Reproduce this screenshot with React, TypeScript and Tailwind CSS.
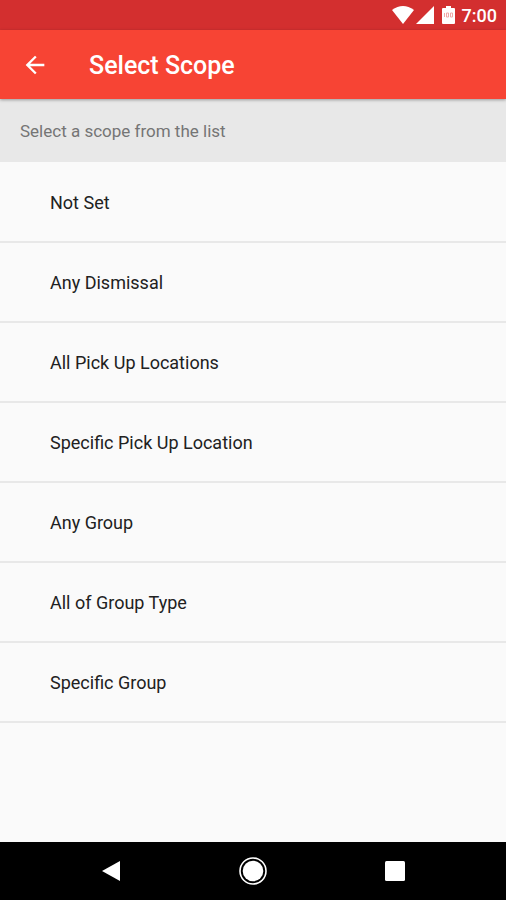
const scopes = [
  'Not Set',
  'Any Dismissal',
  'All Pick Up Locations',
  'Specific Pick Up Location',
  'Any Group',
  'All of Group Type',
  'Specific Group',
];

function StatusBar() {
  return (
    <div className="flex h-[30px] items-center justify-end bg-[#d32f2f] pr-[9px] text-white">
      <svg className="h-[18px] w-[22px]" viewBox="0 0 22 18" fill="currentColor" aria-hidden="true">
        <path d="M11 18 0 4Q11-4 22 4Z" />
      </svg>
      <svg className="ml-[2px] h-[18px] w-[18px]" viewBox="0 0 18 18" fill="currentColor" aria-hidden="true">
        <path d="M18 0v18H0Z" />
      </svg>
      <svg className="ml-2 h-[18px] w-[13px]" viewBox="0 0 13 18" fill="currentColor" aria-hidden="true">
        <path d="M4 0h5v2h3q1 0 1 1v14q0 1-1 1H1q-1 0-1-1V3q0-1 1-1h3Z" />
        <path d="M2.500 7v4M4.500 7h2v4h-2ZM8.500 7h2v4h-2Z" fill="none" stroke="#f0a8a8" strokeWidth="1" />
      </svg>
      <span className="ml-[7px] pt-[2px] text-lg leading-6 font-medium">7:00</span>
    </div>
  );
}

function AppBar() {
  return (
    <header className="relative flex h-[69px] items-center bg-[#f74434] px-[21px] text-white shadow-[0_1px_3px_rgba(0,0,0,0.35)]">
      <button type="button" aria-label="Back" className="flex size-7 items-center justify-center">
        <svg className="size-7" viewBox="0 0 24 24" fill="currentColor" aria-hidden="true">
          <path d="M20 11H7.830l5.590-5.590L12 4l-8 8 8 8 1.410-1.410L7.830 13H20v-2z" />
        </svg>
      </button>
      <h1 className="ml-10 pt-[2px] text-[25px] leading-8 font-medium">Select Scope</h1>
    </header>
  );
}

function NavigationBar() {
  return (
    <nav className="flex h-[58px] items-center justify-around bg-black px-10 text-white">
      <button type="button" aria-label="Back" className="flex size-8 items-center justify-center">
        <svg className="h-[22px] w-5" viewBox="0 0 20 22" fill="currentColor" aria-hidden="true">
          <path d="M19 1v20L1 11Z" />
        </svg>
      </button>
      <button type="button" aria-label="Home" className="flex size-8 items-center justify-center">
        <svg className="size-7" viewBox="0 0 28 28" aria-hidden="true">
          <circle cx="14" cy="14" r="13" fill="none" stroke="currentColor" strokeWidth="1.600" />
          <circle cx="14" cy="14" r="10.300" fill="currentColor" />
        </svg>
      </button>
      <button type="button" aria-label="Recent apps" className="flex size-8 items-center justify-center">
        <svg className="size-5" viewBox="0 0 20 20" fill="currentColor" aria-hidden="true">
          <rect width="20" height="20" rx="1.500" />
        </svg>
      </button>
    </nav>
  );
}

export default function App() {
  return (
    <div className="flex min-h-screen flex-col bg-[#fafafa] font-['Roboto',sans-serif]">
      <StatusBar />
      <AppBar />
      <main className="flex-1">
        <p className="flex h-[63px] items-center bg-[#e8e8e8] px-5 pt-px text-[17px] leading-6 text-[#757575]">
          Select a scope from the list
        </p>
        <ul className="pt-px">
          {scopes.map((scope) => (
            <li key={scope} className="border-b-2 border-[#e8e8e8]">
              <button type="button" className="flex h-[78px] w-full items-center px-[50px] pt-[2px] text-left text-lg leading-6 text-[#212121]">
                {scope}
              </button>
            </li>
          ))}
        </ul>
      </main>
      <NavigationBar />
    </div>
  );
}
